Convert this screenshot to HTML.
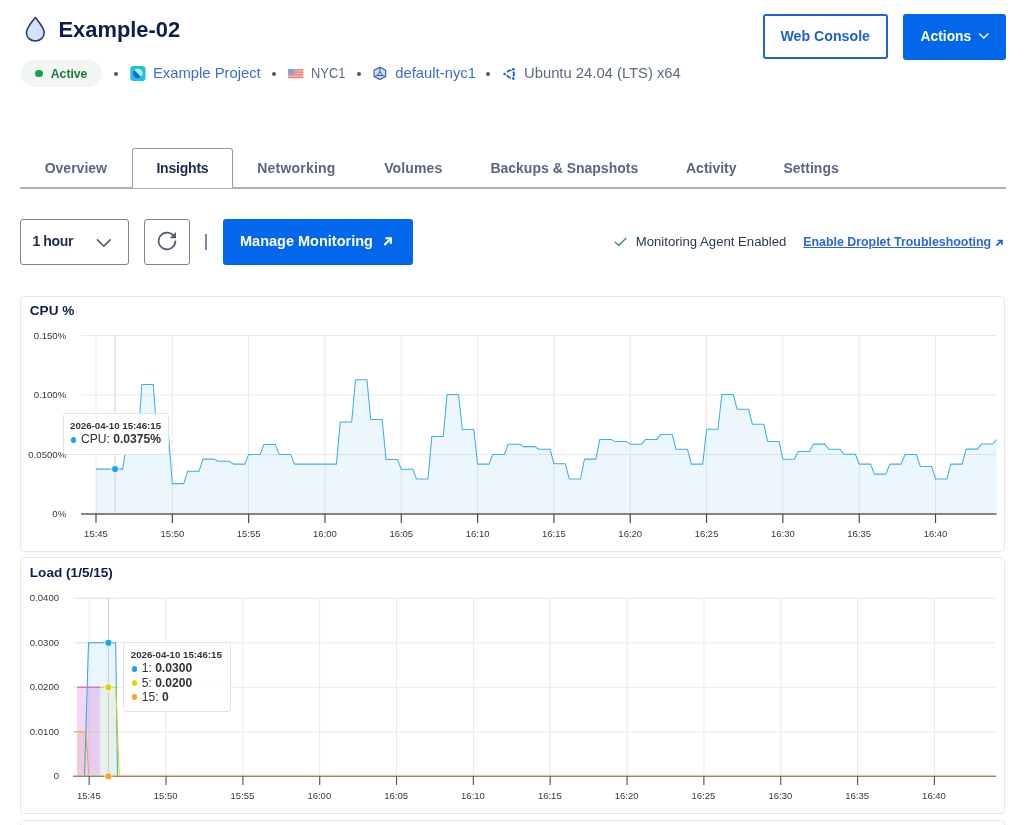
<!DOCTYPE html>
<html><head><meta charset="utf-8">
<style>
html,body{margin:0;padding:0;background:#fff;}
.gs{will-change:transform;}
body{width:1024px;height:825px;overflow:hidden;position:relative;font-family:"Liberation Sans", sans-serif;}
.abs{position:absolute;white-space:nowrap;}
.card{position:absolute;left:20px;width:984.7px;border:1px solid #e8e8ec;border-radius:3.5px;box-sizing:border-box;background:#fff;}
.dot{width:4.1px;height:4.1px;border-radius:50%;background:#535868;}
.meta{top:65.05px;font-size:14.8px;line-height:16px;}
.tab{position:absolute;top:159px;font-size:14px;font-weight:bold;color:#5b6680;line-height:18px;}
.tt{position:absolute;background:rgba(255,255,255,0.9);border:1px solid #e3e3e3;border-radius:3px;box-sizing:border-box;}
</style></head><body><div class="gs" style="position:absolute;left:0;top:0;width:1024px;height:825px;">
<!-- header -->
<svg class="abs" style="left:0;top:0" width="1024" height="825" viewBox="0 0 1024 825">
 <path d="M35.3,17.4 C32,21.8 26.5,27.6 26.4,32.6 C26.4,37.6 30.4,41 35.3,41 C40.2,41 44.2,37.6 44.2,32.6 C44.1,27.6 38.6,21.8 35.3,17.4 Z" fill="#d2e2fb" stroke="#253b70" stroke-width="1.55" stroke-linejoin="round"/>
</svg>
<div id="title" class="abs" style="left:58.5px;top:15.7px;font-size:21.9px;font-weight:bold;color:#0b1f4e;line-height:28px;">Example-02</div>
<div id="pill" class="abs" style="left:21.1px;top:60px;width:81.3px;height:27.2px;border-radius:13.6px;background:#f1f6f2;"></div>
<div class="abs" style="left:35.2px;top:69.7px;width:7.8px;height:7.8px;border-radius:50%;background:#16a04f;"></div>
<div id="active" class="abs" style="left:50.8px;top:66.8px;font-size:12.2px;font-weight:bold;color:#1e7a3c;line-height:15px;">Active</div>

<!-- meta row -->
<div class="abs dot" style="left:114.25px;top:71.55px;"></div>
<div class="abs dot" style="left:272.15px;top:71.55px;"></div>
<div class="abs dot" style="left:356.75px;top:71.55px;"></div>
<div class="abs dot" style="left:486.05px;top:71.55px;"></div>
<svg class="abs" style="left:129.5px;top:66px" width="16" height="15" viewBox="0 0 16 15">
 <rect x="0.3" y="0" width="15.2" height="15" rx="3.2" fill="#1ec5d9"/>
 <circle cx="7.7" cy="7.5" r="4.8" fill="#b3eef8"/>
 <path d="M4.3,4.1 L11.1,10.9 A4.8,4.8 0 0 1 4.3,4.1 Z" fill="#1565e6"/>
</svg>
<div id="proj" class="abs meta" style="left:153px;color:#3b6fd2;">Example Project</div>
<svg class="abs" style="left:287.5px;top:69px" width="16" height="10" viewBox="0 0 16 10">
 <rect x="0" y="0" width="15.3" height="9.2" fill="#f3b3ad"/>
 <rect x="0" y="0" width="15.3" height="1.3" fill="#e8887e"/>
 <rect x="0" y="2.6" width="15.3" height="1.3" fill="#e8887e"/>
 <rect x="0" y="5.2" width="15.3" height="1.3" fill="#e8887e"/>
 <rect x="0" y="7.9" width="15.3" height="1.3" fill="#e8887e"/>
 <rect x="0" y="0" width="6.5" height="5.2" fill="#8aa1d6"/>
</svg>
<div id="nyc" class="abs meta" style="left:311px;color:#5d6884;transform:scaleX(0.87);transform-origin:0 0;">NYC1</div>
<svg class="abs" style="left:372px;top:66px" width="16" height="15" viewBox="0 0 16 15">
 <path d="M7.9,1.2 L13.7,4.3 L13.7,10.5 L7.9,13.6 L2,10.5 L2,4.3 Z" fill="#cddcf7" stroke="#3d58a8" stroke-width="1.1" stroke-linejoin="round"/>
 <path d="M7.9,5.5 L10.4,9.5 L5.4,9.5 Z" fill="none" stroke="#3d58a8" stroke-width="1"/>
 <path d="M7.9,1.2 L7.9,5.5 M2,10.5 L5.4,9.5 M13.7,10.5 L10.4,9.5" stroke="#3d58a8" stroke-width="1"/>
</svg>
<div id="dflt" class="abs meta" style="left:395.3px;color:#3b6fd2;">default-nyc1</div>
<svg class="abs" style="left:501.5px;top:67.5px" width="15" height="13" viewBox="0 0 15 13">
 <circle cx="8.4" cy="5.95" r="3.6" fill="none" stroke="#1d5fd6" stroke-width="1.7" stroke-dasharray="5.0 2.54" transform="rotate(-39.8 8.4 5.95)"/>
 <circle cx="2.6" cy="5.95" r="1.3" fill="#1d5fd6"/>
 <circle cx="11.3" cy="1.2" r="1.3" fill="#1d5fd6"/>
 <circle cx="11.3" cy="10.6" r="1.3" fill="#1d5fd6"/>
</svg>
<div id="ubu" class="abs meta" style="left:524px;color:#5d6884;">Ubuntu 24.04 (LTS) x64</div>

<!-- buttons -->
<div id="webc" class="abs" style="left:763.4px;top:14.4px;width:124.2px;height:45px;box-sizing:border-box;border:2px solid #1a65dc;border-radius:3px;"></div>
<div id="webct" class="abs" style="left:780.4px;top:27.6px;font-size:14.2px;font-weight:bold;color:#1c60d2;line-height:17px;">Web Console</div>
<div id="act" class="abs" style="left:903px;top:14.4px;width:102.6px;height:45.2px;background:#0367ec;border-radius:3px;"></div>
<div id="actt" class="abs" style="left:920.6px;top:27.6px;font-size:13.8px;font-weight:bold;color:#fff;line-height:17px;">Actions</div>
<svg class="abs" style="left:978px;top:32px" width="12" height="8" viewBox="0 0 12 8">
 <path d="M1.2,1.6 L5.8,6 L10.4,1.6" fill="none" stroke="#fff" stroke-width="1.4"/>
</svg>

<!-- tabs -->
<div class="abs" style="left:20px;top:187px;width:986px;height:1.9px;background:#aeb2bc;"></div>
<div class="abs" style="left:132.3px;top:148.3px;width:100.8px;height:40.2px;box-sizing:border-box;border:1.5px solid #969cab;border-bottom:none;border-radius:3px 3px 0 0;background:#fff;"></div>
<div id="tab0" class="tab" style="left:44.7px;">Overview</div>
<div id="tab1" class="tab" style="left:156.4px;color:#1b2a4e;letter-spacing:-0.2px;">Insights</div>
<div id="tab2" class="tab" style="left:257.3px;letter-spacing:0.2px;">Networking</div>
<div id="tab3" class="tab" style="left:384.2px;letter-spacing:0.12px;">Volumes</div>
<div id="tab4" class="tab" style="left:490.4px;">Backups &amp; Snapshots</div>
<div id="tab5" class="tab" style="left:686px;">Activity</div>
<div id="tab6" class="tab" style="left:783.5px;">Settings</div>

<!-- controls -->
<div id="sel" class="abs" style="left:19.8px;top:218.7px;width:109px;height:46.1px;box-sizing:border-box;border:1px solid #7b8497;border-radius:3px;"></div>
<div id="selt" class="abs" style="left:32.4px;top:233.35px;letter-spacing:-0.35px;font-size:14px;font-weight:bold;color:#1b2a4e;line-height:16px;">1 hour</div>
<svg class="abs" style="left:95px;top:236.8px" width="18" height="12" viewBox="0 0 18 12">
 <path d="M2,2.4 L8.8,9.1 L15.6,2.4" fill="none" stroke="#525868" stroke-width="1.5"/>
</svg>
<div id="ref" class="abs" style="left:143.8px;top:218.7px;width:46.1px;height:46.1px;box-sizing:border-box;border:1px solid #7b8497;border-radius:3px;"></div>
<svg class="abs" style="left:156px;top:229px" width="22" height="22" viewBox="0 0 22 22">
 <path d="M18.2,7.6 A8.4,8.4 0 1 0 19.4,11.6" fill="none" stroke="#4f5b76" stroke-width="1.7"/>
 <path d="M20,3.0 L20,9.3 L13.7,9.3 Z" fill="#4f5b76"/>
</svg>
<div class="abs" style="left:205px;top:234.1px;width:1.8px;height:15.8px;background:#7f8aa0;"></div>
<div id="mm" class="abs" style="left:222.6px;top:219.2px;width:190.3px;height:45.6px;background:#0367ec;border-radius:3px;"></div>
<div id="mmt" class="abs" style="left:240px;top:233.2px;font-size:14.5px;font-weight:bold;color:#fff;line-height:17px;">Manage Monitoring</div>
<svg class="abs" style="left:381.7px;top:236.2px" width="11" height="11" viewBox="0 0 11 11">
 <path d="M3.4,2.2 H8.9 V7.7" fill="none" stroke="#fff" stroke-width="2.1"/>
 <path d="M2.9,8.5 L8.3,3.0" stroke="#fff" stroke-width="2.1" stroke-linecap="round"/>
</svg>
<svg class="abs" style="left:613px;top:236px" width="15" height="11" viewBox="0 0 15 11">
 <path d="M1.8,6.0 L5.8,9.3 L13.3,2.0" fill="none" stroke="#2a9a62" stroke-width="1.5"/>
</svg>
<div id="mae" class="abs" style="left:635.8px;top:234.2px;font-size:13.15px;color:#2b3854;line-height:16px;">Monitoring Agent Enabled</div>
<div id="edt" class="abs" style="left:803.2px;top:234.2px;font-size:12.4px;font-weight:bold;color:#2c67d8;line-height:16px;text-decoration:underline;">Enable Droplet Troubleshooting</div>
<svg class="abs" style="left:994.5px;top:238px" width="9" height="9" viewBox="0 0 9 9">
 <path d="M2.6,2.5 H6.9 V6.8" fill="none" stroke="#1f5fd4" stroke-width="1.7"/>
 <path d="M1.9,7.2 L6.4,2.9" stroke="#1f5fd4" stroke-width="1.7" stroke-linecap="round"/>
</svg>

<div id="cards">
<div class="card" style="top:295.7px;height:256px;"></div>
<div class="card" style="top:557.3px;height:256.5px;"></div>
<div class="card" style="top:819.65px;height:40px;"></div>
</div>
<div id="cpu_t" class="abs" style="left:29.8px;top:302.5px;font-size:13.6px;font-weight:bold;color:#0b1f4e;line-height:16px;">CPU %</div>
<div id="load_t" class="abs" style="left:29.8px;top:564.8px;font-size:13.6px;font-weight:bold;color:#0b1f4e;line-height:16px;">Load (1/5/15)</div>
<svg class="abs" style="left:0;top:0" width="1024" height="825" viewBox="0 0 1024 825" font-family='"Liberation Sans", sans-serif'>
<line x1="81" y1="454.50" x2="996" y2="454.50" stroke="#eaeaea" stroke-width="1"/>
<line x1="81" y1="395.00" x2="996" y2="395.00" stroke="#eaeaea" stroke-width="1"/>
<line x1="81" y1="335.50" x2="996" y2="335.50" stroke="#eaeaea" stroke-width="1"/>
<line x1="96.00" y1="335.5" x2="96.00" y2="514.0" stroke="#eaeaea" stroke-width="1"/>
<line x1="172.32" y1="335.5" x2="172.32" y2="514.0" stroke="#eaeaea" stroke-width="1"/>
<line x1="248.64" y1="335.5" x2="248.64" y2="514.0" stroke="#eaeaea" stroke-width="1"/>
<line x1="324.96" y1="335.5" x2="324.96" y2="514.0" stroke="#eaeaea" stroke-width="1"/>
<line x1="401.28" y1="335.5" x2="401.28" y2="514.0" stroke="#eaeaea" stroke-width="1"/>
<line x1="477.60" y1="335.5" x2="477.60" y2="514.0" stroke="#eaeaea" stroke-width="1"/>
<line x1="553.92" y1="335.5" x2="553.92" y2="514.0" stroke="#eaeaea" stroke-width="1"/>
<line x1="630.24" y1="335.5" x2="630.24" y2="514.0" stroke="#eaeaea" stroke-width="1"/>
<line x1="706.56" y1="335.5" x2="706.56" y2="514.0" stroke="#eaeaea" stroke-width="1"/>
<line x1="782.88" y1="335.5" x2="782.88" y2="514.0" stroke="#eaeaea" stroke-width="1"/>
<line x1="859.20" y1="335.5" x2="859.20" y2="514.0" stroke="#eaeaea" stroke-width="1"/>
<line x1="935.52" y1="335.5" x2="935.52" y2="514.0" stroke="#eaeaea" stroke-width="1"/>
<path d="M96.00,469.10 L107.45,469.10 L111.26,469.10 L122.71,469.10 L126.53,444.60 L137.98,444.60 L141.79,384.50 L153.24,384.50 L157.06,434.50 L168.50,434.50 L172.32,483.60 L183.77,483.60 L187.58,471.30 L199.03,471.30 L202.85,459.10 L214.30,459.10 L218.11,461.30 L229.56,461.30 L233.38,464.10 L244.82,464.10 L248.64,454.40 L260.09,454.40 L263.90,444.40 L275.35,444.40 L279.17,454.40 L290.62,454.40 L294.43,464.10 L305.88,464.10 L309.70,464.10 L321.14,464.10 L324.96,464.10 L336.41,464.10 L340.22,422.00 L351.67,422.00 L355.49,379.80 L366.94,379.80 L370.75,419.50 L382.20,419.50 L386.02,459.40 L397.46,459.40 L401.28,469.20 L412.73,469.20 L416.54,478.90 L427.99,478.90 L431.81,436.40 L443.26,436.40 L447.07,394.50 L458.52,394.50 L462.34,429.40 L473.78,429.40 L477.60,464.10 L489.05,464.10 L492.86,454.40 L504.31,454.40 L508.13,444.20 L519.58,444.20 L523.39,446.60 L534.84,446.60 L538.66,449.20 L550.10,449.20 L553.92,463.75 L565.37,463.75 L569.18,478.90 L580.63,478.90 L584.45,459.10 L595.90,459.10 L599.71,439.40 L611.16,439.40 L614.98,441.40 L626.42,441.40 L630.24,444.20 L641.69,444.20 L645.50,439.40 L656.95,439.40 L660.77,434.40 L672.22,434.40 L676.03,449.20 L687.48,449.20 L691.30,464.10 L702.74,464.10 L706.56,429.20 L718.01,429.20 L721.82,394.50 L733.27,394.50 L737.09,409.20 L748.54,409.20 L752.35,424.20 L763.80,424.20 L767.62,441.40 L779.06,441.40 L782.88,459.20 L794.33,459.20 L798.14,451.40 L809.59,451.40 L813.41,444.10 L824.86,444.10 L828.67,449.20 L840.12,449.20 L843.94,454.30 L855.38,454.30 L859.20,464.10 L870.65,464.10 L874.46,474.10 L885.91,474.10 L889.73,464.10 L901.18,464.10 L904.99,454.50 L916.44,454.50 L920.26,466.40 L931.70,466.40 L935.52,479.00 L946.97,479.00 L950.78,464.10 L962.23,464.10 L966.05,449.10 L977.50,449.10 L981.31,444.00 L992.76,444.00 L996.58,439.50 L996.58,514.0 L96.00,514.0 Z" fill="#2ca7e8" fill-opacity="0.09" stroke="none"/>
<line x1="115.08" y1="335.5" x2="115.08" y2="514.0" stroke="#cfd3d8" stroke-width="1"/>
<path d="M96.00,469.10 L107.45,469.10 L111.26,469.10 L122.71,469.10 L126.53,444.60 L137.98,444.60 L141.79,384.50 L153.24,384.50 L157.06,434.50 L168.50,434.50 L172.32,483.60 L183.77,483.60 L187.58,471.30 L199.03,471.30 L202.85,459.10 L214.30,459.10 L218.11,461.30 L229.56,461.30 L233.38,464.10 L244.82,464.10 L248.64,454.40 L260.09,454.40 L263.90,444.40 L275.35,444.40 L279.17,454.40 L290.62,454.40 L294.43,464.10 L305.88,464.10 L309.70,464.10 L321.14,464.10 L324.96,464.10 L336.41,464.10 L340.22,422.00 L351.67,422.00 L355.49,379.80 L366.94,379.80 L370.75,419.50 L382.20,419.50 L386.02,459.40 L397.46,459.40 L401.28,469.20 L412.73,469.20 L416.54,478.90 L427.99,478.90 L431.81,436.40 L443.26,436.40 L447.07,394.50 L458.52,394.50 L462.34,429.40 L473.78,429.40 L477.60,464.10 L489.05,464.10 L492.86,454.40 L504.31,454.40 L508.13,444.20 L519.58,444.20 L523.39,446.60 L534.84,446.60 L538.66,449.20 L550.10,449.20 L553.92,463.75 L565.37,463.75 L569.18,478.90 L580.63,478.90 L584.45,459.10 L595.90,459.10 L599.71,439.40 L611.16,439.40 L614.98,441.40 L626.42,441.40 L630.24,444.20 L641.69,444.20 L645.50,439.40 L656.95,439.40 L660.77,434.40 L672.22,434.40 L676.03,449.20 L687.48,449.20 L691.30,464.10 L702.74,464.10 L706.56,429.20 L718.01,429.20 L721.82,394.50 L733.27,394.50 L737.09,409.20 L748.54,409.20 L752.35,424.20 L763.80,424.20 L767.62,441.40 L779.06,441.40 L782.88,459.20 L794.33,459.20 L798.14,451.40 L809.59,451.40 L813.41,444.10 L824.86,444.10 L828.67,449.20 L840.12,449.20 L843.94,454.30 L855.38,454.30 L859.20,464.10 L870.65,464.10 L874.46,474.10 L885.91,474.10 L889.73,464.10 L901.18,464.10 L904.99,454.50 L916.44,454.50 L920.26,466.40 L931.70,466.40 L935.52,479.00 L946.97,479.00 L950.78,464.10 L962.23,464.10 L966.05,449.10 L977.50,449.10 L981.31,444.00 L992.76,444.00 L996.58,439.50" fill="none" stroke="#40aee9" stroke-width="1.05" stroke-linejoin="round"/>
<line x1="81" y1="514.0" x2="996.5" y2="514.0" stroke="#5c5c5c" stroke-width="1.5"/>
<line x1="96.00" y1="514.0" x2="96.00" y2="523" stroke="#444" stroke-width="1.15"/>
<text x="96.00" y="536.9" text-anchor="middle" font-size="9.5" fill="#383838">15:45</text>
<line x1="172.32" y1="514.0" x2="172.32" y2="523" stroke="#444" stroke-width="1.15"/>
<text x="172.32" y="536.9" text-anchor="middle" font-size="9.5" fill="#383838">15:50</text>
<line x1="248.64" y1="514.0" x2="248.64" y2="523" stroke="#444" stroke-width="1.15"/>
<text x="248.64" y="536.9" text-anchor="middle" font-size="9.5" fill="#383838">15:55</text>
<line x1="324.96" y1="514.0" x2="324.96" y2="523" stroke="#444" stroke-width="1.15"/>
<text x="324.96" y="536.9" text-anchor="middle" font-size="9.5" fill="#383838">16:00</text>
<line x1="401.28" y1="514.0" x2="401.28" y2="523" stroke="#444" stroke-width="1.15"/>
<text x="401.28" y="536.9" text-anchor="middle" font-size="9.5" fill="#383838">16:05</text>
<line x1="477.60" y1="514.0" x2="477.60" y2="523" stroke="#444" stroke-width="1.15"/>
<text x="477.60" y="536.9" text-anchor="middle" font-size="9.5" fill="#383838">16:10</text>
<line x1="553.92" y1="514.0" x2="553.92" y2="523" stroke="#444" stroke-width="1.15"/>
<text x="553.92" y="536.9" text-anchor="middle" font-size="9.5" fill="#383838">16:15</text>
<line x1="630.24" y1="514.0" x2="630.24" y2="523" stroke="#444" stroke-width="1.15"/>
<text x="630.24" y="536.9" text-anchor="middle" font-size="9.5" fill="#383838">16:20</text>
<line x1="706.56" y1="514.0" x2="706.56" y2="523" stroke="#444" stroke-width="1.15"/>
<text x="706.56" y="536.9" text-anchor="middle" font-size="9.5" fill="#383838">16:25</text>
<line x1="782.88" y1="514.0" x2="782.88" y2="523" stroke="#444" stroke-width="1.15"/>
<text x="782.88" y="536.9" text-anchor="middle" font-size="9.5" fill="#383838">16:30</text>
<line x1="859.20" y1="514.0" x2="859.20" y2="523" stroke="#444" stroke-width="1.15"/>
<text x="859.20" y="536.9" text-anchor="middle" font-size="9.5" fill="#383838">16:35</text>
<line x1="935.52" y1="514.0" x2="935.52" y2="523" stroke="#444" stroke-width="1.15"/>
<text x="935.52" y="536.9" text-anchor="middle" font-size="9.5" fill="#383838">16:40</text>
<text x="66.2" y="517.20" text-anchor="end" font-size="9.6" fill="#383838">0%</text>
<text x="66.2" y="457.70" text-anchor="end" font-size="9.6" fill="#383838">0.0500%</text>
<text x="66.2" y="398.20" text-anchor="end" font-size="9.6" fill="#383838">0.100%</text>
<text x="66.2" y="338.70" text-anchor="end" font-size="9.6" fill="#383838">0.150%</text>
<circle cx="115.08" cy="469.1" r="3.6" fill="#17a5f2" stroke="#fff" stroke-width="0.8"/>
<line x1="73.1" y1="731.80" x2="996" y2="731.80" stroke="#eaeaea" stroke-width="1"/>
<line x1="73.1" y1="687.30" x2="996" y2="687.30" stroke="#eaeaea" stroke-width="1"/>
<line x1="73.1" y1="642.80" x2="996" y2="642.80" stroke="#eaeaea" stroke-width="1"/>
<line x1="73.1" y1="598.30" x2="996" y2="598.30" stroke="#eaeaea" stroke-width="1"/>
<line x1="89.20" y1="598.3" x2="89.20" y2="776.3" stroke="#eaeaea" stroke-width="1"/>
<line x1="166.04" y1="598.3" x2="166.04" y2="776.3" stroke="#eaeaea" stroke-width="1"/>
<line x1="242.87" y1="598.3" x2="242.87" y2="776.3" stroke="#eaeaea" stroke-width="1"/>
<line x1="319.71" y1="598.3" x2="319.71" y2="776.3" stroke="#eaeaea" stroke-width="1"/>
<line x1="396.54" y1="598.3" x2="396.54" y2="776.3" stroke="#eaeaea" stroke-width="1"/>
<line x1="473.38" y1="598.3" x2="473.38" y2="776.3" stroke="#eaeaea" stroke-width="1"/>
<line x1="550.21" y1="598.3" x2="550.21" y2="776.3" stroke="#eaeaea" stroke-width="1"/>
<line x1="627.05" y1="598.3" x2="627.05" y2="776.3" stroke="#eaeaea" stroke-width="1"/>
<line x1="703.88" y1="598.3" x2="703.88" y2="776.3" stroke="#eaeaea" stroke-width="1"/>
<line x1="780.72" y1="598.3" x2="780.72" y2="776.3" stroke="#eaeaea" stroke-width="1"/>
<line x1="857.55" y1="598.3" x2="857.55" y2="776.3" stroke="#eaeaea" stroke-width="1"/>
<line x1="934.39" y1="598.3" x2="934.39" y2="776.3" stroke="#eaeaea" stroke-width="1"/>
<path d="M84.5,776.3 L88.5,642.80 L115.7,642.80 L117.5,776.3 Z" fill="#eaf6fd"/>
<path d="M77,687 L87.16,687 L85.84,731.3 L77,731.3 Z" fill="#f4d7f6"/>
<path d="M77,731.3 L85.84,731.3 L84.5,776.3 L77,776.3 Z" fill="#edcad8"/>
<path d="M87.16,687 L100.2,687 L100.2,776.3 L84.5,776.3 L85.84,731.3 Z" fill="#e6cdef"/>
<path d="M100.2,687 L116.3,687 L117.5,776.3 L100.2,776.3 Z" fill="#e8f0ea"/>
<line x1="77" y1="731.80" x2="117.5" y2="731.80" stroke="#000" stroke-opacity="0.06" stroke-width="1"/>
<line x1="77" y1="687.30" x2="117.5" y2="687.30" stroke="#000" stroke-opacity="0.06" stroke-width="1"/>
<line x1="77" y1="642.80" x2="117.5" y2="642.80" stroke="#000" stroke-opacity="0.06" stroke-width="1"/>
<line x1="77" y1="598.30" x2="117.5" y2="598.30" stroke="#000" stroke-opacity="0.06" stroke-width="1"/>
<line x1="89.20" y1="642.5" x2="89.20" y2="776.3" stroke="#000" stroke-opacity="0.06" stroke-width="1"/>
<line x1="108.41" y1="598.3" x2="108.41" y2="776.3" stroke="#c8ccd2" stroke-width="1"/>
<path d="M84.5,776.3 L88.5,642.80 L115.7,642.80 L117.5,776.3" fill="none" stroke="#2ca7e0" stroke-width="1"/>
<line x1="77" y1="687.30" x2="100.3" y2="687.30" stroke="#d66fd6" stroke-width="1.5"/>
<path d="M100.3,687.30 L115.8,687.30 L119.3,776.3" fill="none" stroke="#d8d21a" stroke-width="1"/>
<path d="M73.6,731.80 L85.9,731.80 L88.9,776.3" fill="none" stroke="#f5a34a" stroke-width="1"/>
<line x1="73.1" y1="776.3" x2="996" y2="776.3" stroke="#98885f" stroke-width="1.5"/>
<line x1="73.1" y1="775.0" x2="996" y2="775.0" stroke="#f3e6b0" stroke-width="1" stroke-opacity="0.5"/>
<line x1="89.20" y1="776.3" x2="89.20" y2="785" stroke="#555" stroke-width="1.15"/>
<text x="88.80" y="799.1" text-anchor="middle" font-size="9.5" fill="#383838">15:45</text>
<line x1="166.04" y1="776.3" x2="166.04" y2="785" stroke="#555" stroke-width="1.15"/>
<text x="165.64" y="799.1" text-anchor="middle" font-size="9.5" fill="#383838">15:50</text>
<line x1="242.87" y1="776.3" x2="242.87" y2="785" stroke="#555" stroke-width="1.15"/>
<text x="242.47" y="799.1" text-anchor="middle" font-size="9.5" fill="#383838">15:55</text>
<line x1="319.71" y1="776.3" x2="319.71" y2="785" stroke="#555" stroke-width="1.15"/>
<text x="319.31" y="799.1" text-anchor="middle" font-size="9.5" fill="#383838">16:00</text>
<line x1="396.54" y1="776.3" x2="396.54" y2="785" stroke="#555" stroke-width="1.15"/>
<text x="396.14" y="799.1" text-anchor="middle" font-size="9.5" fill="#383838">16:05</text>
<line x1="473.38" y1="776.3" x2="473.38" y2="785" stroke="#555" stroke-width="1.15"/>
<text x="472.98" y="799.1" text-anchor="middle" font-size="9.5" fill="#383838">16:10</text>
<line x1="550.21" y1="776.3" x2="550.21" y2="785" stroke="#555" stroke-width="1.15"/>
<text x="549.81" y="799.1" text-anchor="middle" font-size="9.5" fill="#383838">16:15</text>
<line x1="627.05" y1="776.3" x2="627.05" y2="785" stroke="#555" stroke-width="1.15"/>
<text x="626.65" y="799.1" text-anchor="middle" font-size="9.5" fill="#383838">16:20</text>
<line x1="703.88" y1="776.3" x2="703.88" y2="785" stroke="#555" stroke-width="1.15"/>
<text x="703.48" y="799.1" text-anchor="middle" font-size="9.5" fill="#383838">16:25</text>
<line x1="780.72" y1="776.3" x2="780.72" y2="785" stroke="#555" stroke-width="1.15"/>
<text x="780.32" y="799.1" text-anchor="middle" font-size="9.5" fill="#383838">16:30</text>
<line x1="857.55" y1="776.3" x2="857.55" y2="785" stroke="#555" stroke-width="1.15"/>
<text x="857.15" y="799.1" text-anchor="middle" font-size="9.5" fill="#383838">16:35</text>
<line x1="934.39" y1="776.3" x2="934.39" y2="785" stroke="#555" stroke-width="1.15"/>
<text x="933.99" y="799.1" text-anchor="middle" font-size="9.5" fill="#383838">16:40</text>
<text x="59.1" y="779.40" text-anchor="end" font-size="9.6" fill="#383838">0</text>
<text x="59.1" y="734.90" text-anchor="end" font-size="9.6" fill="#383838">0.0100</text>
<text x="59.1" y="690.40" text-anchor="end" font-size="9.6" fill="#383838">0.0200</text>
<text x="59.1" y="645.90" text-anchor="end" font-size="9.6" fill="#383838">0.0300</text>
<text x="59.1" y="601.40" text-anchor="end" font-size="9.6" fill="#383838">0.0400</text>
<circle cx="108.41" cy="642.80" r="3.6" fill="#17a5f2" stroke="#fff" stroke-width="0.8"/>
<circle cx="108.41" cy="687.30" r="3.6" fill="#dcd30c" stroke="#fff" stroke-width="0.8"/>
<circle cx="108.41" cy="776.30" r="3.6" fill="#f5a623" stroke="#fff" stroke-width="0.8"/>
</svg>
<!-- tooltips -->
<div class="tt" style="left:62.9px;top:413.4px;width:105.7px;height:41.4px;"></div>
<div id="tt1t" class="abs" style="left:70px;top:419.5px;font-size:9.7px;font-weight:bold;color:#333;line-height:12px;">2026-04-10 15:46:15</div>
<div class="abs" style="left:70.6px;top:437px;width:5.6px;height:5.6px;border-radius:50%;background:#1aa3ec;"></div>
<div id="tt1r" class="abs" style="left:81px;top:432.4px;font-size:12.1px;color:#333;line-height:14px;">CPU: <b>0.0375%</b></div>

<div class="tt" style="left:123.2px;top:641.8px;width:107.6px;height:70.2px;"></div>
<div id="tt2t" class="abs" style="left:130.8px;top:648.5px;font-size:9.7px;font-weight:bold;color:#333;line-height:12px;">2026-04-10 15:46:15</div>
<div class="abs" style="left:131.8px;top:666px;width:5.6px;height:5.6px;border-radius:50%;background:#1aa3ec;"></div>
<div class="abs" style="left:131.8px;top:680.2px;width:5.6px;height:5.6px;border-radius:50%;background:#dcd30c;"></div>
<div class="abs" style="left:131.8px;top:694.4px;width:5.6px;height:5.6px;border-radius:50%;background:#f5a623;"></div>
<div id="tt2r" class="abs" style="left:141.7px;top:661.4px;font-size:12.1px;color:#333;line-height:14.3px;">1: <b>0.0300</b><br>5: <b>0.0200</b><br>15: <b>0</b></div>
</div></body></html>
